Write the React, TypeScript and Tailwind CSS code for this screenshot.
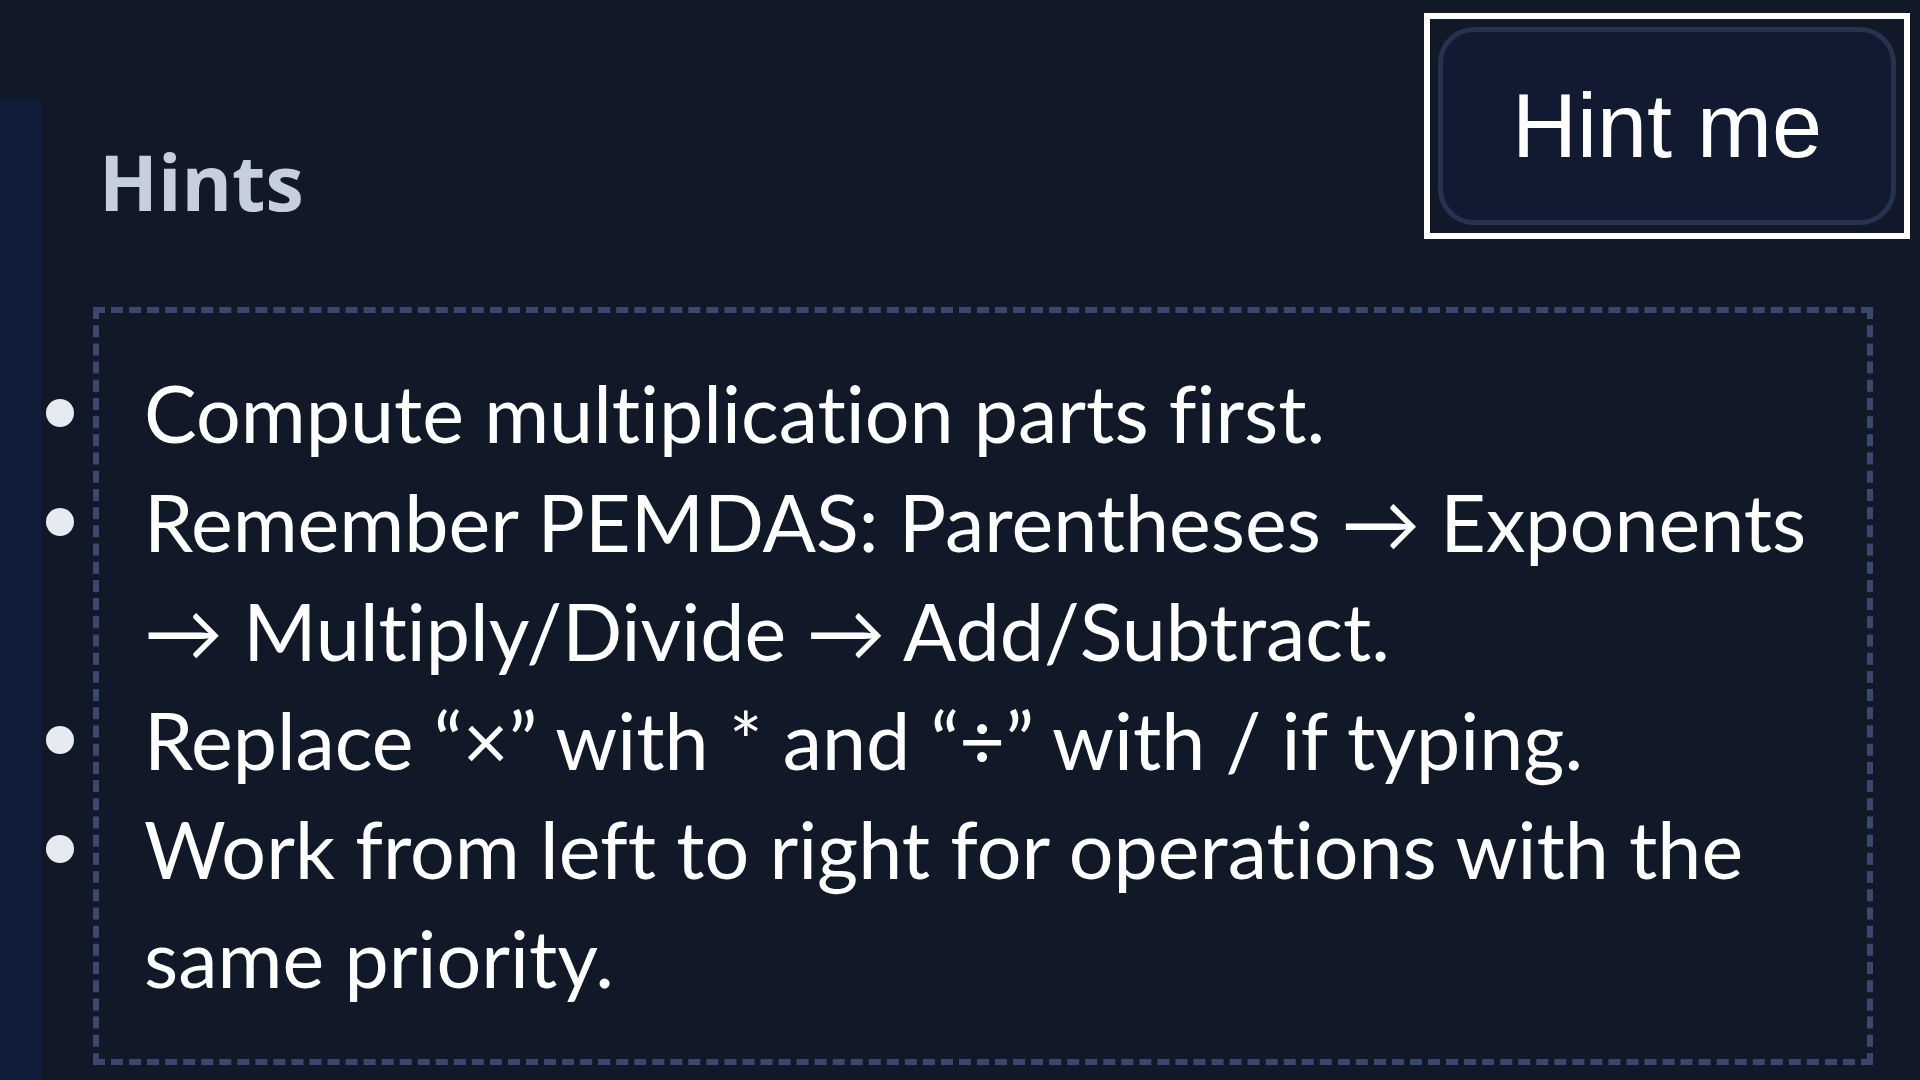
import React from 'react';

const hints: string[] = [
  'Compute multiplication parts first.',
  'Remember PEMDAS: Parentheses → Exponents → Multiply/Divide → Add/Subtract.',
  'Replace “×” with * and “÷” with / if typing.',
  'Work from left to right for operations with the same priority.',
];

export default function App() {
  return (
    <div className="min-h-screen w-full bg-[#111827] flex overflow-hidden">
      {/* left rail */}
      <div className="w-[41px] shrink-0 pt-[99px] flex flex-col">
        <div className="flex-1 bg-[#111e3b]" />
      </div>

      <div className="flex-1 flex flex-col">
        <div className="flex justify-between items-start pl-[58px] pr-[10px] pt-[13px]">
          <h2
            className="mt-[129px] text-[77px] leading-[80px] font-bold text-[#c6cfdd]"
            style={{ fontFamily: '"Open Sans", sans-serif' }}
          >
            Hints
          </h2>
          <div className="border-[6px] border-white p-[8px]">
            <button
              className="w-[458px] h-[198px] rounded-[36px] border-[5px] border-[#26334f] bg-[#111a31] text-white text-[90px] flex items-center justify-center"
              style={{ fontFamily: '"Liberation Sans", Arial, sans-serif' }}
            >
              Hint me
            </button>
          </div>
        </div>

        <div className="mt-[68px] ml-[52px] mr-[47px] border-[6px] border-dashed border-[#3a4870] pt-[45px] pb-[47px] pl-[45px] pr-[36px]">
          <ul
            className="text-[79px] leading-[109px] text-white [font-variant-ligatures:none]"
            style={{ fontFamily: 'Lato, "Open Sans", sans-serif' }}
          >
            {hints.map((hint) => (
              <li key={hint} className="flex items-start">
                <span className="-ml-[99px] w-[99px] shrink-0 h-[109px] flex items-center pl-[1px]">
                  <span className="h-[28px] w-[28px] rounded-full bg-[#e8eaf2]" />
                </span>
                <span>{hint}</span>
              </li>
            ))}
          </ul>
        </div>
      </div>
    </div>
  );
}
